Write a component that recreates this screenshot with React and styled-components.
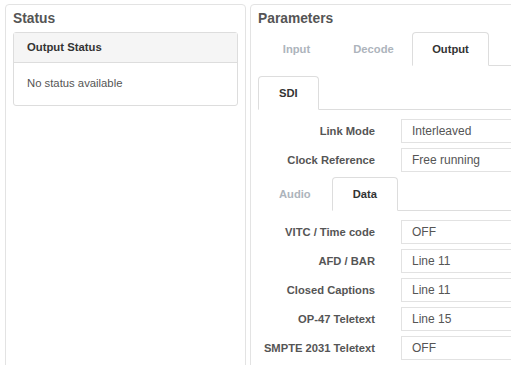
import styled, { createGlobalStyle } from 'styled-components'

const GlobalStyle = createGlobalStyle`
  html, body {
    margin: 0;
    padding: 0;
    overflow: hidden;
    background: #fff;
    font-family: "Liberation Sans", Arial, sans-serif;
  }
`

const Page = styled.div`
  display: flex;
  gap: 4px;
  box-sizing: border-box;
  width: 100vw;
  height: 100vh;
  overflow: hidden;
  padding: 4px 0 0 5px;
`

const Panel = styled.section`
  flex: none;
  width: ${(p) => p.width}px;
  min-height: 420px;
  box-sizing: border-box;
  border: 1px solid #e3e3e3;
  border-radius: 4px;
  padding: 0 7px;
`

const PanelTitle = styled.h3`
  margin: 0;
  height: 27px;
  line-height: 28px;
  font-size: 13.8px;
  font-weight: 700;
  color: #555;
`

const Card = styled.div`
  border: 1px solid #ddd;
  border-radius: 3px;
`

const CardHeader = styled.div`
  height: 29px;
  line-height: 28px;
  padding: 0 13px;
  background: #f5f5f5;
  border-bottom: 1px solid #ddd;
  font-size: 11.3px;
  font-weight: 700;
  color: #333;
`

const CardBody = styled.div`
  height: 42px;
  line-height: 41px;
  padding: 0 13px;
  font-size: 11.3px;
  color: #555;
`

const TabList = styled.div`
  display: flex;
  height: 33px;
  border-bottom: 1px solid #ddd;
  margin-top: ${(p) => p.gap || 0}px;
`

const Tab = styled.div`
  box-sizing: border-box;
  height: 34px;
  ${(p) => (p.fixed ? 'width: 77px;' : 'padding: 0 20px;')}
  display: flex;
  align-items: center;
  justify-content: center;
  font-size: 11.2px;
  font-weight: 700;
  color: ${(p) => (p.active ? '#333' : '#adb4bc')};
  background: #fff;
  border: 1px solid ${(p) => (p.active ? '#ddd' : 'transparent')};
  border-bottom-color: ${(p) => (p.active ? '#fff' : 'transparent')};
  border-radius: 4px 4px 0 0;
`

const Form = styled.div`
  display: flex;
  flex-direction: column;
  gap: 5px;
  margin-top: 9px;
  margin-bottom: 5px;
`

const Row = styled.div`
  display: flex;
  align-items: center;
  gap: 26px;
`

const Label = styled.label`
  width: 117px;
  text-align: right;
  font-size: 11.2px;
  font-weight: 700;
  color: #555;
`

const Field = styled.div`
  flex: 1;
  box-sizing: border-box;
  height: 24px;
  line-height: 22px;
  padding: 0 10px;
  border: 1px solid #e2e2e2;
  font-size: 12px;
  color: #555;
`

const sdiRows = [
  ['Link Mode', 'Interleaved'],
  ['Clock Reference', 'Free running'],
]

const dataRows = [
  ['VITC / Time code', 'OFF'],
  ['AFD / BAR', 'Line 11'],
  ['Closed Captions', 'Line 11'],
  ['OP-47 Teletext', 'Line 15'],
  ['SMPTE 2031 Teletext', 'OFF'],
]

const Fields = ({ rows }) => (
  <Form>
    {rows.map(([label, value]) => (
      <Row key={label}>
        <Label>{label}</Label>
        <Field>{value}</Field>
      </Row>
    ))}
  </Form>
)

const App = () => {
  return (
    <>
      <GlobalStyle />
      <Page>
        <Panel width={241}>
          <PanelTitle>Status</PanelTitle>
          <Card>
            <CardHeader>Output Status</CardHeader>
            <CardBody>No status available</CardBody>
          </Card>
        </Panel>
        <Panel width={420}>
          <PanelTitle>Parameters</PanelTitle>
          <TabList>
            <Tab fixed>Input</Tab>
            <Tab fixed>Decode</Tab>
            <Tab fixed active>Output</Tab>
          </TabList>
          <TabList gap={10}>
            <Tab active>SDI</Tab>
          </TabList>
          <Fields rows={sdiRows} />
          <TabList>
            <Tab>Audio</Tab>
            <Tab active>Data</Tab>
          </TabList>
          <Fields rows={dataRows} />
        </Panel>
      </Page>
    </>
  )
}

export default App
